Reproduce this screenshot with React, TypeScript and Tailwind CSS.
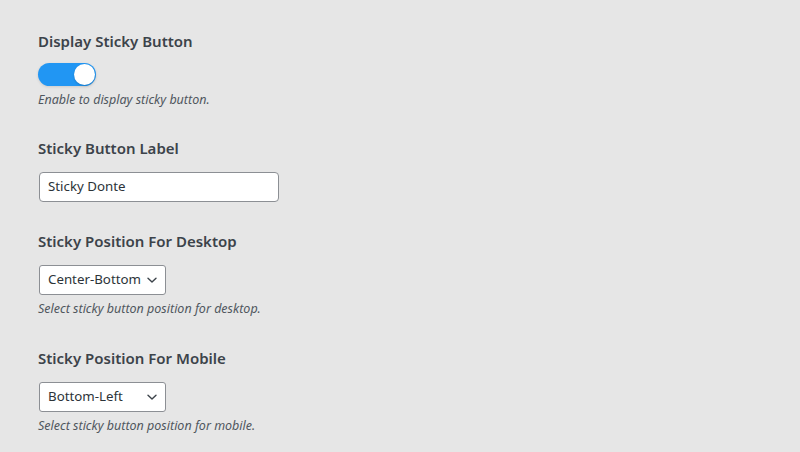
import React from "react";

function Chevron() {
  return (
    <svg width="12" height="12" viewBox="0 0 12 12" className="shrink-0">
      <path d="M2 4.2 L6 8 L10 4.2" fill="none" stroke="#3c434a" strokeWidth="1.4" strokeLinecap="round" strokeLinejoin="round" />
    </svg>
  );
}

function Heading({ children }: { children: React.ReactNode }) {
  return (
    <div className="text-[15px] leading-[20px] font-semibold text-[#3c434a]">{children}</div>
  );
}

function Desc({ children }: { children: React.ReactNode }) {
  return <div className="text-[12.5px] leading-[16px] italic text-[#50575e]">{children}</div>;
}

function Select({ value, width }: { value: string; width: string }) {
  return (
    <div
      className={`${width} h-[30px] flex items-center justify-between pl-[8px] pr-[7px] bg-white border border-[#8c8f94] rounded-[3px] text-[13.3px] text-[#2c3338]`}
    >
      <span>{value}</span>
      <Chevron />
    </div>
  );
}

export default function App() {
  return (
    <div
      className="w-[800px] h-[452px] bg-[#e6e6e6] pl-[38px] pt-[31px]"
      style={{ fontFamily: '"Noto Sans", "Open Sans", sans-serif' }}
    >
      <Heading>Display Sticky Button</Heading>
      <div className="mt-[12px] w-[58px] h-[23px] rounded-full bg-[#2196f3] relative shadow-[0_1px_3px_rgba(0,0,0,0.12)]">
        <div className="absolute right-[1px] top-[1px] w-[21px] h-[21px] rounded-full bg-white shadow-[0_1px_2px_rgba(0,0,0,0.2)]" />
      </div>
      <div className="mt-[6px]">
        <Desc>Enable to display sticky button.</Desc>
      </div>

      <div className="mt-[30px]">
        <Heading>Sticky Button Label</Heading>
      </div>
      <div className="mt-[14px] ml-[1px] w-[240px] h-[30px] flex items-center px-[8px] bg-white border border-[#8c8f94] rounded-[4px] text-[13.3px] text-[#2c3338]">
        Sticky Donte
      </div>

      <div className="mt-[29px]">
        <Heading>Sticky Position For Desktop</Heading>
      </div>
      <div className="mt-[14px] ml-[1px]">
        <Select value="Center-Bottom" width="w-[127px]" />
      </div>
      <div className="mt-[6px]">
        <Desc>Select sticky button position for desktop.</Desc>
      </div>

      <div className="mt-[31px]">
        <Heading>Sticky Position For Mobile</Heading>
      </div>
      <div className="mt-[14px] ml-[1px]">
        <Select value="Bottom-Left" width="w-[127px]" />
      </div>
      <div className="mt-[6px]">
        <Desc>Select sticky button position for mobile.</Desc>
      </div>
    </div>
  );
}
